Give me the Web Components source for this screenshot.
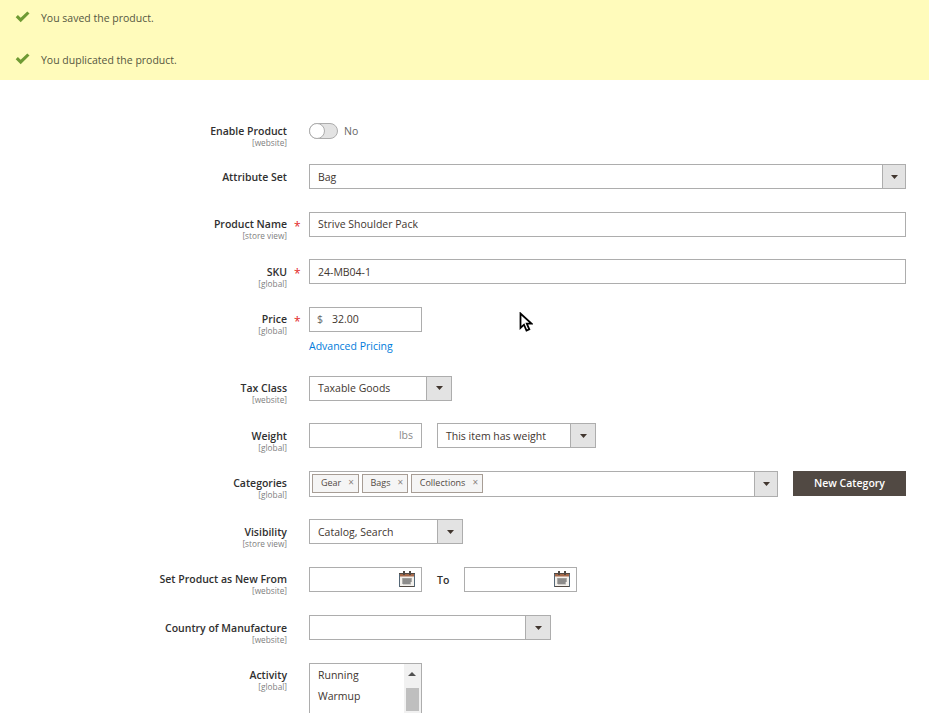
<!DOCTYPE html>
<html lang="en"><head><meta charset="utf-8"><title>Product</title>
<style>
html,body{margin:0;padding:0;height:713px;overflow:hidden;background:#fff}
body{font:10.5px/15px "Open Sans",sans-serif;color:#41362f;position:relative}
</style></head><body>
<x-messages>
  <x-message>You saved the product.</x-message>
  <x-message>You duplicated the product.</x-message>
</x-messages>
<x-form>
  <x-field label="Enable Product" scope="[website]" class="toggle-row"><x-toggle>No</x-toggle></x-field>
  <x-field label="Attribute Set"><x-select style="flex:1;--btn:23px">Bag</x-select></x-field>
  <x-field label="Product Name" scope="[store view]" required><x-input style="flex:1" value="Strive Shoulder Pack"></x-input></x-field>
  <x-field label="SKU" scope="[global]" required><x-input style="flex:1;--lh:24px" value="24-MB04-1"></x-input></x-field>
  <x-field label="Price" scope="[global]" required>
    <div style="display:flex;flex-direction:column;align-items:flex-start">
      <x-input style="width:113px;--pad:7px" prefix="$" value="32.00"></x-input>
      <a style="color:#007bdb;line-height:14.9px;margin-top:7px">Advanced Pricing</a>
    </div>
  </x-field>
  <x-field label="Tax Class" scope="[website]"><x-select style="width:143px;--lh:22px">Taxable Goods</x-select></x-field>
  <x-field label="Weight" scope="[global]"><x-input style="width:113px" suffix="lbs"></x-input><x-select style="width:159px;margin-left:15px">This item has weight</x-select></x-field>
  <x-field label="Categories" scope="[global]">
    <x-multi style="width:469px"><x-tag>Gear</x-tag><x-tag>Bags</x-tag><x-tag>Collections</x-tag></x-multi>
    <x-button style="margin-left:15px">New Category</x-button>
  </x-field>
  <x-field label="Visibility" scope="[store view]"><x-select style="width:154px">Catalog, Search</x-select></x-field>
  <x-field label="Set Product as New From" scope="[website]">
    <x-date style="width:113px"></x-date>
    <span style="width:42px;padding-left:15px;box-sizing:border-box;line-height:26px;font-weight:600;color:#303030">To</span>
    <x-date style="width:113px"></x-date>
  </x-field>
  <x-field label="Country of Manufacture" scope="[website]"><x-select style="width:242px"></x-select></x-field>
  <x-field label="Activity" scope="[global]"><x-list style="width:113px"><div>Running</div><div>Warmup</div></x-list></x-field>
</x-form>
<x-cursor></x-cursor>
<script>
function def(name, css, html, extra){
  customElements.define(name, class extends HTMLElement{
    constructor(){super();const r=this.attachShadow({mode:'open'});
      r.innerHTML='<style>'+css+'</style>'+html;}
    connectedCallback(){extra&&extra.call(this,this.shadowRoot);}
  });
}
const ARROW='<svg width="7" height="4" viewBox="0 0 7 4" aria-hidden="true"><path d="M0 0h7L3.5 4z" fill="#41362f"/></svg>';

def('x-messages',':host{display:block;height:80px;background:#fffbbb;box-sizing:border-box;padding-top:3px}','<slot></slot>');
def('x-message',`:host{display:flex;align-items:center;height:30px;padding-left:15px;color:#555741}
  :host(:last-child){padding-top:12px;box-sizing:border-box;height:42px}
  svg{margin-right:11px;flex:none;margin-top:-2px}`,
  '<svg width="15" height="12" viewBox="0 0 15 12" aria-hidden="true"><path d="M.7 6.300 2.900 4 5.700 6.800 12.300.4 14.500 2.600 5.700 11.300z" fill="#6f9a33"/></svg><slot></slot>');
def('x-form',':host{display:flex;flex-direction:column;row-gap:22.5px;padding:38.55px 23px 0 0}','<slot></slot>');
def('x-field',`:host{display:grid;grid-template-columns:287px 22px 1fr;align-items:start}
  :host(.toggle-row){margin-bottom:-2px}
  .l{text-align:right;padding-top:6.5px;line-height:13px;font-weight:600;color:#303030;white-space:nowrap}
  .s{display:block;font-size:8.25px;line-height:10px;margin-bottom:-4.5px;font-weight:400;color:#808080}
  .r{color:#e22626;font-size:12px;line-height:29px;height:25px;padding-left:7px;font-weight:400}
  .c{display:flex;align-items:flex-start;min-width:0}`,
  '<div class="l"><span class="t"></span><span class="s"></span></div><div class="r"></div><div class="c"><slot></slot></div>',
  function(r){r.querySelector('.t').textContent=this.getAttribute('label');
    const sc=this.getAttribute('scope'),s=r.querySelector('.s');
    if(sc)s.textContent=sc;else s.remove();
    if(this.hasAttribute('required'))r.querySelector('.r').textContent='*';});
def('x-toggle',`:host{display:flex;align-items:center;height:25px;color:#666}
  .t{width:29px;height:16px;box-sizing:border-box;border:1px solid #adadad;border-radius:8px;background:#e3e3e3;margin-right:6px;position:relative}
  .k{position:absolute;left:-1px;top:-1px;width:16px;height:16px;box-sizing:border-box;border:1px solid #adadad;border-radius:50%;background:#fff}`,
  '<div class="t"><div class="k"></div></div><slot></slot>');
def('x-select',`:host{display:flex;height:25px;box-sizing:border-box;border:1px solid #adadad;background:#fff;line-height:var(--lh,24px)}
  .v{flex:1;padding-left:8px;white-space:nowrap;overflow:hidden}
  .b{width:var(--btn,25px);flex:none;background:#e3e3e3;border-left:1px solid #adadad;display:flex;align-items:center;justify-content:center;box-sizing:border-box}`,
  '<div class="v"><slot></slot></div><div class="b">'+ARROW+'</div>');
def('x-input',`:host{display:flex;height:25px;box-sizing:border-box;border:1px solid #adadad;background:#fff;line-height:var(--lh,23px);padding:0 8px 0 var(--pad,8px)}
  .p{color:#666;margin-right:9px}.v{flex:1}.x{color:#8a8a8a}`,
  '<span class="p"></span><span class="v"></span><span class="x"></span>',
  function(r){const g=n=>this.getAttribute(n)||'';
    const p=r.querySelector('.p');if(g('prefix'))p.textContent=g('prefix');else p.remove();
    r.querySelector('.v').textContent=g('value');
    r.querySelector('.x').textContent=g('suffix');});
def('x-multi',`:host{display:flex;height:26px;box-sizing:border-box;border:1px solid #adadad;background:#fff}
  .v{flex:1;display:flex;gap:2.5px;padding:2px;box-sizing:border-box}
  .b{width:23px;flex:none;background:#e3e3e3;border-left:1px solid #adadad;display:flex;align-items:center;justify-content:center;box-sizing:border-box}`,
  '<div class="v"><slot></slot></div><div class="b">'+ARROW+'</div>');
def('x-tag',`:host{display:flex;align-items:center;height:19px;box-sizing:border-box;border:1px solid #a79d95;background:#f5f5f5;padding:0 4px 1px 8px;font-size:9px;color:#514943;line-height:15px}
  i{font-style:normal;margin-left:7px;color:#8a837e;font-size:10px}`,
  '<slot></slot><i>×</i>');
def('x-button',`:host{display:flex;align-items:center;justify-content:center;width:113px;height:25px;background:#514943;color:#fff;font-weight:600}`,'<slot></slot>');
def('x-date',`:host{display:flex;align-items:center;justify-content:flex-end;height:25px;box-sizing:border-box;border:1px solid #adadad;background:#fff;padding-right:6px}`,
  `<svg width="16" height="16" viewBox="0 0 16 16" aria-hidden="true">
  <rect x=".5" y="2.500" width="15" height="13" fill="#f4f1ec" stroke="#514943"/>
  <rect x="1" y="3" width="14" height="2.500" fill="#a5694a"/>
  <rect x="4" y="0" width="2" height="4" fill="#514943"/><rect x="10" y="0" width="2" height="4" fill="#514943"/>
  <path d="M.2 3v13M15.800 3v13" stroke="#5aa0d8" stroke-width=".5"/>
  <path d="M3 8h10M3 10h10M3 12h8M5 7.500v6M7 7.500v6M9 7.500v6M11 7.500v6" stroke="#6b6b6b" stroke-width="1"/></svg>`);
def('x-list',`:host{display:flex;height:80px;box-sizing:border-box;border:1px solid #adadad;background:#fff}
  .v{flex:1;padding:1px 8px 0;line-height:21px;overflow:hidden}
  .sb{width:17px;flex:none;background:#f1f1f1;position:relative}
  .u{position:absolute;left:4px;top:8px;width:0;height:0;border:4px solid transparent;border-top:0;border-bottom:4px solid #505050}
  .th{position:absolute;left:2px;right:2px;top:24px;height:23px;background:#bfbfbf}`,
  '<div class="v"><slot></slot></div><div class="sb"><div class="u"></div><div class="th"></div></div>');
def('x-cursor',':host{position:absolute;left:519px;top:312px;width:14px;height:21px;display:block}',
  '<svg width="14" height="21" viewBox="0 0 14 21" aria-hidden="true"><path d="M1.500 1.500v14.500l3.500-3.300 2.500 5.900 2.800-1.200-2.500-5.700H12.500z" fill="#fff" stroke="#000" stroke-width="1.800"/></svg>');
</script>
</body></html>
